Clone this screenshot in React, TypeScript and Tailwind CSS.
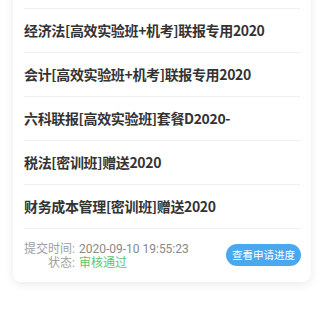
import React from 'react';

const courses = [
  '经济法[高效实验班+机考]联报专用2020',
  '会计[高效实验班+机考]联报专用2020',
  '六科联报[高效实验班]套餐D2020-',
  '税法[密训班]赠送2020',
  '财务成本管理[密训班]赠送2020',
];

export default function App() {
  return (
    <div className="w-[324px] h-[309px] overflow-hidden bg-white font-['Noto_Sans_CJK_SC',sans-serif]">
      <div className="mx-[13px] -mt-[12px] rounded-[8px] bg-white px-[11px] pt-[20px] shadow-[0_2px_10px_rgba(0,0,0,0.09)]">
        {courses.map((c) => (
          <div
            key={c}
            className="flex h-[44px] items-center border-t border-[#efefef] text-[14px] font-bold text-[#333] tracking-[-0.35px]"
          >
            {c}
          </div>
        ))}
        <div className="flex h-[54px] items-center justify-between border-t border-[#efefef]">
          <div className="grid grid-cols-[auto_auto] gap-x-[4px] font-['Roboto','Noto_Sans_CJK_SC',sans-serif] text-[12px] leading-[14px]">
            <span className="text-right text-[#a0a0a0]">提交时间:</span>
            <span className="text-[#888]">2020-09-10 19:55:23</span>
            <span className="text-right text-[#a0a0a0]">状态:</span>
            <span className="text-[#5fc56a]">审核通过</span>
          </div>
          <button className="mr-[-1px] -mt-[1px] h-[22px] rounded-full bg-[#4aa9ee] px-[6px] text-[10.5px] text-white">
            查看申请进度
          </button>
        </div>
      </div>
    </div>
  );
}
